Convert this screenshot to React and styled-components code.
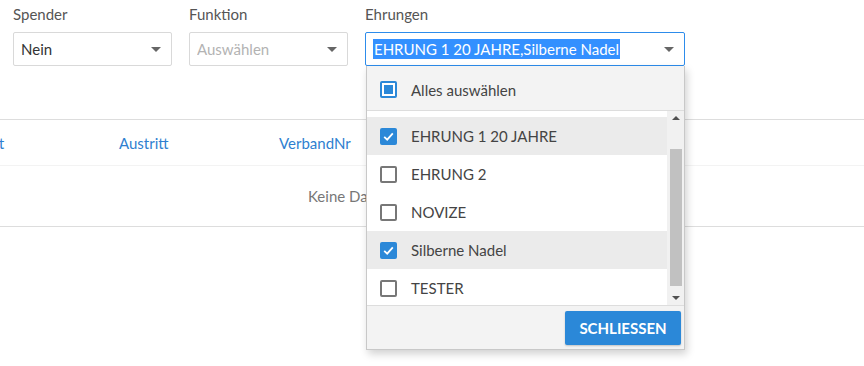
import React from 'react';
import styled, { createGlobalStyle, css } from 'styled-components';

const Global = createGlobalStyle`
  html, body { margin: 0; padding: 0; background: #fff; }
  body {
    font-family: "Lato", "Noto Sans", sans-serif;
    font-size: 15px;
    color: #333;
    width: 864px;
    height: 366px;
    overflow: hidden;
  }
`;

const Page = styled.div`
  padding-top: 4px;
`;

const Filters = styled.div`
  display: flex;
  gap: 17px;
  padding-left: 13px;
`;

const Field = styled.div`
  display: flex;
  flex-direction: column;
  width: ${p => p.$w}px;
  position: relative;
`;

const Label = styled.div`
  height: 20px;
  line-height: 20px;
  color: #555;
  margin-bottom: 8px;
`;

const Select = styled.div`
  height: 34px;
  box-sizing: border-box;
  border: 1px solid ${p => (p.$open ? '#2d8ceb' : '#d9d9d9')};
  border-radius: 2px;
  display: flex;
  align-items: center;
  padding: 0 10px 0 7px;
  background: #fff;
`;

const Value = styled.span`
  flex: 1;
  color: ${p => (p.$placeholder ? '#b3b3b3' : '#333')};
  white-space: nowrap;
  overflow: hidden;
`;

const Highlight = styled.span`
  background: #3390ff;
  color: #fff;
  line-height: 20px;
  display: inline-block;
  padding: 0 1px;
`;

const Caret = styled.span`
  width: 0;
  height: 0;
  border-left: 5px solid transparent;
  border-right: 5px solid transparent;
  border-top: 5px solid #666;
  flex-shrink: 0;
`;

const Table = styled.div`
  margin-top: 53px;
  border-top: 1px solid #ddd;
  border-bottom: 1px solid #ddd;
  overflow: hidden;
`;

const HeadRow = styled.div`
  display: flex;
  height: 45px;
  align-items: center;
  margin-left: -41px;
  border-bottom: 1px solid #f3f3f3;
`;

const HeadCell = styled.div`
  width: 160px;
  color: #2f7fd0;
`;

const EmptyRow = styled.div`
  height: 60px;
  line-height: 60px;
  padding-left: 308px;
  color: #777;
`;

const Panel = styled.div`
  position: absolute;
  top: 100%;
  left: 1px;
  width: 319px;
  box-sizing: border-box;
  border: 1px solid #c8c8c8;
  border-top: none;
  background: #f3f3f3;
  box-shadow: 2px 4px 8px rgba(0, 0, 0, 0.18);
  z-index: 10;
`;

const AllRow = styled.div`
  height: 45px;
  box-sizing: border-box;
  padding-top: 3px;
  display: flex;
  align-items: center;
  padding-left: 13px;
  gap: 14px;
  color: #444;
  border-bottom: 1px solid #ddd;
`;

const ListWrap = styled.div`
  display: flex;
  height: 194px;
  background: #fff;
  border-bottom: 1px solid #ddd;
`;

const List = styled.div`
  flex: 1;
  overflow: hidden;
  padding-top: 6px;
`;

const Item = styled.div`
  height: 38px;
  flex-shrink: 0;
  display: flex;
  align-items: center;
  padding-left: 13px;
  gap: 14px;
  color: #444;
  background: ${p => (p.$active ? '#ebebeb' : '#fff')};
`;

const Box = styled.span`
  width: 17px;
  height: 17px;
  box-sizing: border-box;
  border-radius: 2px;
  display: flex;
  align-items: center;
  justify-content: center;
  flex-shrink: 0;
  ${p =>
    p.$checked
      ? css`background: #2b88d8;`
      : p.$partial
      ? css`
          border: 2px solid #2b88d8;
          background: #fff;
          &::after {
            content: '';
            width: 9px;
            height: 9px;
            background: #2b88d8;
          }
        `
      : css`
          border: 2px solid #777;
          background: #fff;
        `}
`;

const Scrollbar = styled.div`
  width: 17px;
  background: #f1f1f1;
  display: flex;
  flex-direction: column;
  align-items: center;
  justify-content: space-between;
  padding: 5px 0;
  box-sizing: border-box;
`;

const Arrow = styled.span`
  width: 0;
  height: 0;
  border-left: 4px solid transparent;
  border-right: 4px solid transparent;
  ${p =>
    p.$up
      ? css`border-bottom: 4px solid #505050;`
      : css`border-top: 4px solid #505050;`}
`;

const Thumb = styled.div`
  width: 12px;
  height: 137px;
  background: #c1c1c1;
  margin-top: 20px;
  margin-bottom: 2px;
`;

const Footer = styled.div`
  height: 43px;
  display: flex;
  align-items: center;
  justify-content: flex-end;
  padding-right: 3px;
`;

const Button = styled.button`
  width: 116px;
  height: 34px;
  border: none;
  border-radius: 2px;
  background: #2b88d8;
  color: #fff;
  font-family: inherit;
  font-size: 15px;
  font-weight: 700;
  box-shadow: 0 1px 2px rgba(0, 0, 0, 0.2);
`;

const Check = () => (
  <svg width="13" height="13" viewBox="0 0 13 13">
    <path d="M2.2 6.8 L5.2 9.6 L10.8 3.4" fill="none" stroke="#fff" strokeWidth="1.8" />
  </svg>
);

const items = [
  { name: 'EHRUNG 1 20 JAHRE', checked: true },
  { name: 'EHRUNG 2' },
  { name: 'NOVIZE' },
  { name: 'Silberne Nadel', checked: true },
  { name: 'TESTER' },
];

export default function App() {
  return (
    <Page>
      <Global />
      <Filters>
        <Field $w={159}>
          <Label>Spender</Label>
          <Select>
            <Value>Nein</Value>
            <Caret />
          </Select>
        </Field>
        <Field $w={159}>
          <Label>Funktion</Label>
          <Select>
            <Value $placeholder>Auswählen</Value>
            <Caret />
          </Select>
        </Field>
        <Field $w={320}>
          <Label>Ehrungen</Label>
          <Select $open>
            <Value>
              <Highlight>EHRUNG 1 20 JAHRE,Silberne Nadel</Highlight>
            </Value>
            <Caret />
          </Select>
          <Panel>
            <AllRow>
              <Box $partial />
              Alles auswählen
            </AllRow>
            <ListWrap>
              <List>
                {items.map(it => (
                  <Item key={it.name} $active={it.checked}>
                    <Box $checked={it.checked}>{it.checked && <Check />}</Box>
                    {it.name}
                  </Item>
                ))}
              </List>
              <Scrollbar>
                <Arrow $up />
                <Thumb />
                <Arrow />
              </Scrollbar>
            </ListWrap>
            <Footer>
              <Button>SCHLIESSEN</Button>
            </Footer>
          </Panel>
        </Field>
      </Filters>
      <Table>
        <HeadRow>
          <HeadCell>Eintritt</HeadCell>
          <HeadCell>Austritt</HeadCell>
          <HeadCell>VerbandNr</HeadCell>
        </HeadRow>
        <EmptyRow>Keine Daten</EmptyRow>
      </Table>
    </Page>
  );
}
